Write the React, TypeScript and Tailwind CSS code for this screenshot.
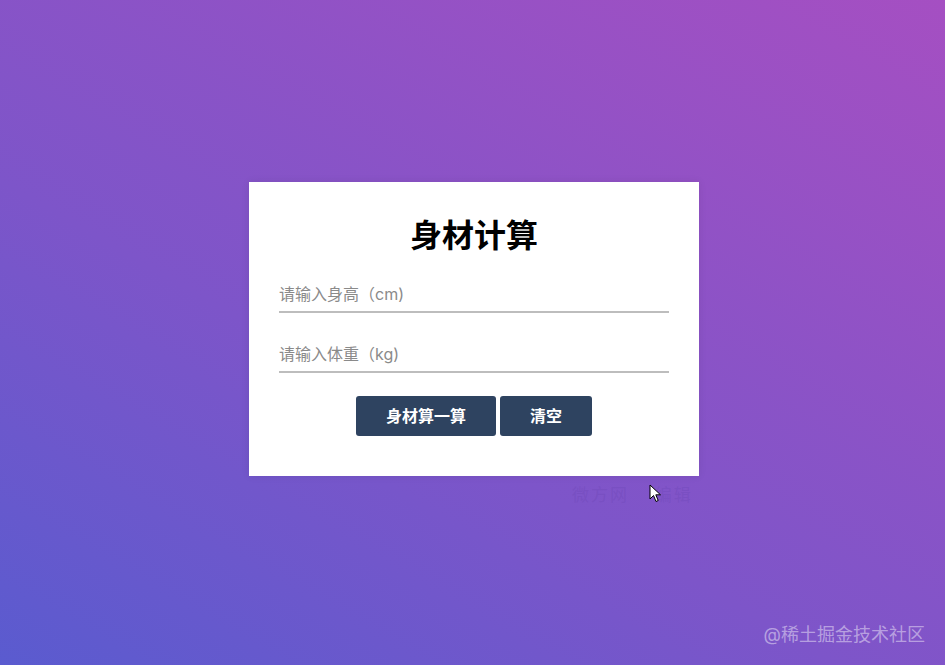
export default function App() {
  return (
    <div className="relative min-h-[665px] w-full overflow-hidden bg-[linear-gradient(30deg,#5a5bcf_0%,#7d55c9_40%,#a54fc2_100%)] font-['Inter','Noto_Sans_CJK_SC',sans-serif]">
      <div className="flex justify-center pt-[182px] pl-[3px]">
        <div className="w-[450px] bg-white px-[30px] pt-[30px] pb-[40px] shadow-[0_0_8px_rgba(0,0,0,0.08)]">
          <h1 className="text-center text-[32px] font-bold leading-[48px] text-black">身材计算</h1>
          <div className="mt-[12px] flex flex-col gap-[19px]">
            <input
              placeholder="请输入身高（cm)"
              className="h-[41px] w-full border-b-2 border-[#bdbdbd] bg-transparent pt-[5px] text-[16px] text-[#333] outline-none placeholder:text-[#8a8a8a]"
            />
            <input
              placeholder="请输入体重（kg)"
              className="h-[41px] w-full border-b-2 border-[#bdbdbd] bg-transparent pt-[5px] text-[16px] text-[#333] outline-none placeholder:text-[#8a8a8a]"
            />
          </div>
          <div className="mt-[23px] flex justify-center gap-[4px]">
            <button className="h-[40px] w-[140px] rounded-[3px] bg-[#2e4360] text-[16px] font-bold text-white">身材算一算</button>
            <button className="h-[40px] w-[92px] rounded-[3px] bg-[#2e4360] text-[16px] font-bold text-white">清空</button>
          </div>
        </div>
      </div>
      <div className="absolute left-[572px] top-[483px] text-[17px] text-[#6f48b8]/40 tracking-[2px]">微方网　 编辑</div>
      <svg className="absolute left-[649px] top-[484px]" width="13" height="19" viewBox="0 0 13 19">
        <path d="M1 1 L1 15 L4.5 11.5 L7 17.5 L9.2 16.5 L6.8 10.8 L11.5 10.8 Z" fill="white" stroke="black" strokeWidth="1" strokeLinejoin="round" />
      </svg>
      <div className="absolute right-[20px] bottom-[17px] text-[18px] text-white/45">@稀土掘金技术社区</div>
    </div>
  );
}
